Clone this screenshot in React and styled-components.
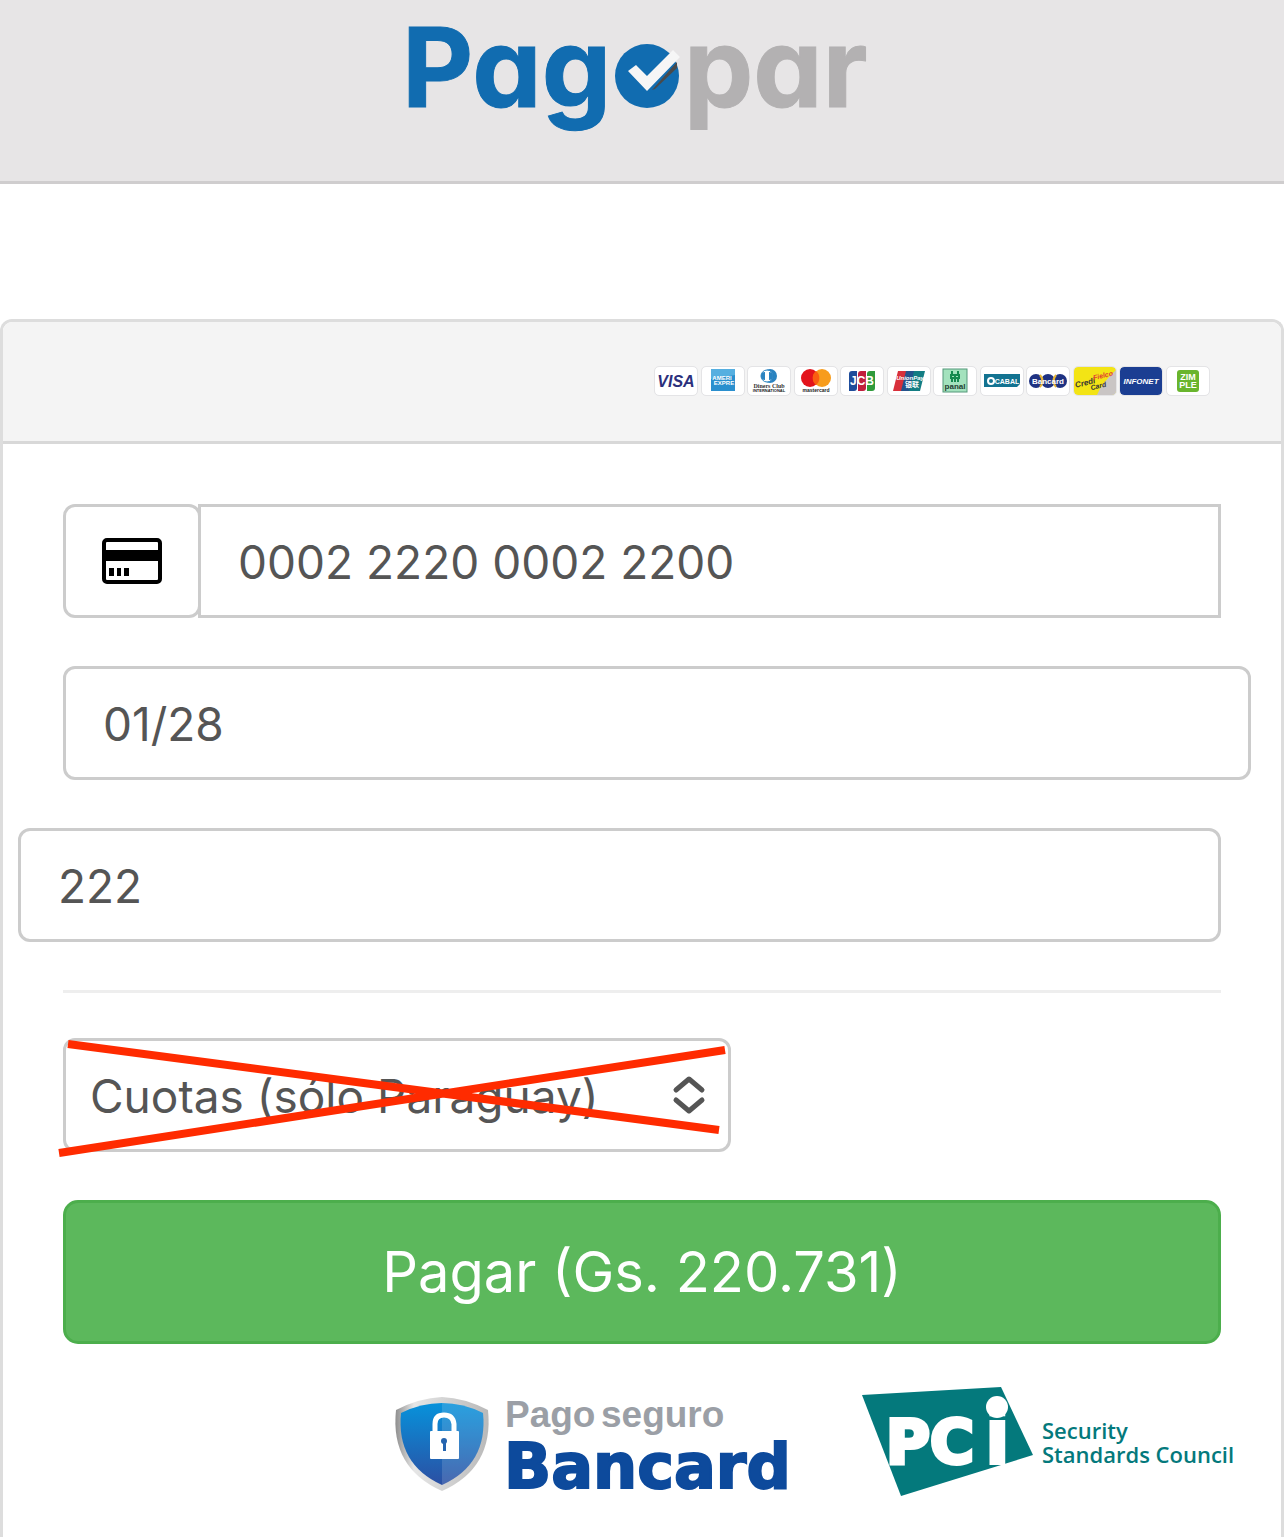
import React, { useState } from 'react';

// package
import styled, { createGlobalStyle } from 'styled-components';

// styles

const GlobalStyle = createGlobalStyle`
    * {
        box-sizing: border-box;
    }
    body {
        margin: 0;
        background-color: #fff;
        color: #555;
        font-family: Inter, "Liberation Sans", sans-serif;
    }
`;
const Page = styled.div`
    display: flex;
    flex-direction: column;
    min-height: 100vh;
`;
const Head = styled.header`
    display: flex;
    justify-content: center;
    margin-bottom: 135px;
    background-color: #e7e5e6;
    border-bottom: 3px solid #cfcdce;
`;
const Logo = styled.svg`
    display: block;
    width: 480px;
    max-width: 100%;
`;
const LogoWord = styled.text`
    fill: ${(props) => props.$color};
    stroke: ${(props) => props.$color};
    stroke-width: 1;
    font-family: Inter, sans-serif;
    font-size: 110px;
    font-weight: 700;
    font-feature-settings: "cv11";
`;
const Panel = styled.main`
    flex: 1;
    border: 3px solid #ddd;
    border-bottom: 0;
    border-radius: 12px 12px 0 0;
`;
const PanelHeading = styled.div`
    display: flex;
    justify-content: flex-end;
    padding: 45px 72px 46px;
    background-color: #f4f4f4;
    border-bottom: 3px solid #d8d8d8;
    border-radius: 9px 9px 0 0;
`;
const Brands = styled.div`
    display: flex;
    justify-content: space-between;
    width: 554px;
    max-width: 100%;
`;
const Brand = styled.svg`
    width: 42px;
    height: 28px;
    background-color: ${(props) => props.$color || '#fff'};
    border-radius: 4px;
    outline: 1px solid #e4e4e6;
`;
const CardText = styled.text`
    font-family: ${(props) => props.$font || '"Liberation Sans"'}, sans-serif;
    font-size: ${(props) => props.$size}px;
    font-style: ${(props) => props.$italic ? 'italic' : 'normal'};
    font-weight: 700;
    text-anchor: middle;
`;
const Form = styled.form`
    padding: 60px 60px 0;
`;
const Group = styled.div`
    display: flex;
    margin: 0 ${(props) => props.$right || 0} 48px ${(props) => props.$left || 0};
`;
const Addon = styled.label`
    display: flex;
    flex: none;
    align-items: center;
    justify-content: center;
    width: 138px;
    border: 3px solid #ccc;
    border-radius: 12px;
`;
const Input = styled.input`
    flex: 1;
    min-width: 0;
    height: 114px;
    padding: 2px 37px 0;
    background: transparent;
    border: 3px solid #ccc;
    border-radius: 12px;
    color: #555;
    font-family: inherit;
    font-size: 46px;
`;
const CardInput = styled(Input)`
    margin-left: -3px;
    border-radius: 0;
`;
const Divider = styled.hr`
    margin: 0 0 45px;
    border: 0;
    border-top: 3px solid #eee;
`;
const SelectBox = styled.div`
    position: relative;
    max-width: 668px;
    margin-bottom: 48px;
`;
const Select = styled.select`
    display: block;
    width: 100%;
    height: 114px;
    padding: 2px 24px 0;
    appearance: none;
    background-color: #fff;
    border: 3px solid #ccc;
    border-radius: 12px;
    color: #555;
    font-family: inherit;
    font-size: 46px;
`;
const Arrows = styled.svg`
    position: absolute;
    top: 37px;
    right: 24px;
    width: 36px;
    height: 40px;
    pointer-events: none;
    fill: none;
    stroke: #555;
    stroke-width: 5;
    stroke-linecap: round;
    stroke-linejoin: round;
`;
const Cross = styled.svg`
    position: absolute;
    top: 0;
    left: 0;
    width: 100%;
    height: 100%;
    overflow: visible;
    pointer-events: none;
    fill: none;
    stroke: #ff2b00;
    stroke-width: 8;
`;
const PayButton = styled.button`
    display: block;
    width: 100%;
    height: 144px;
    background-color: #5cb85c;
    border: 3px solid #4cae4c;
    border-radius: 15px;
    color: #fff;
    font-family: inherit;
    font-size: 56px;
    cursor: pointer;
`;
const Seals = styled.div`
    display: flex;
    justify-content: flex-end;
    gap: 20px;
    padding: 26px 21px 0 0;
`;
const Seal = styled.svg`
    display: block;
    min-width: 0;
`;
const SealSmall = styled.text`
    fill: #9b9fa6;
    font-family: "Liberation Sans", sans-serif;
    font-size: 37px;
    font-weight: 700;
`;
const SealBrand = styled.text`
    fill: #0d4a9c;
    stroke: #0d4a9c;
    stroke-width: 2;
    font-family: "DejaVu Sans", sans-serif;
    font-size: 62px;
    font-weight: 700;
`;
const PciText = styled.text`
    fill: #fff;
    stroke: #fff;
    stroke-width: ${(props) => props.$stroke};
    font-family: "DejaVu Sans", sans-serif;
    font-size: ${(props) => props.$size}px;
    font-weight: 700;
`;
const PciCaption = styled.text`
    fill: #04797c;
    font-family: "Open Sans", sans-serif;
    font-size: 22px;
    font-weight: 600;
`;

// components

function PagoparLogo() {
    return (
        <Logo viewBox="402 0 480 181" role="img" aria-label="Pagopar">
            <LogoWord x="402" y="107" $color="#116cb0">Pag</LogoWord>
            <circle cx="647" cy="76" r="32" fill="#116cb0" />
            <path d="M652 90 L677 62 L677 68 L655 89 Z" fill="#4a4a4a" />
            <path d="M628 71 L636 65 L647 76 L673 50 L680 57 L647 91 Z" fill="#f6f6f6" />
            <LogoWord x="684" y="107" $color="#b3b1b2">par</LogoWord>
        </Logo>
    )
}

function CreditCardIcon() {
    return (
        <svg width="60" height="46" viewBox="0 0 60 46" aria-hidden="true">
            <rect x="2" y="2" width="56" height="42" rx="3" fill="#fff" stroke="#000" strokeWidth="4" />
            <path d="M2 12h56v11H2z" />
            <path d="M7 30h5v8H7zM15 30h4v8h-4zM22 30h5v8h-5z" />
        </svg>
    )
}

const brands = [
    {
        name: 'Visa',
        art: <CardText x="21" y="20" $size={16} $italic fill="#2b2f7c">VISA</CardText>,
    },
    {
        name: 'American Express',
        art: (
            <>
                <rect x="9" y="2" width="24" height="22" fill="#2a8fce" />
                <path d="M9 2h24v6L9 12z" fill="#56afe0" />
                <CardText x="20" y="13" $size={6} fill="#fff">AMERI</CardText>
                <CardText x="22" y="18" $size={6} fill="#fff">EXPRE</CardText>
            </>
        ),
    },
    {
        name: 'Diners Club',
        art: (
            <>
                <circle cx="22" cy="9" r="7" fill="#2a83c0" />
                <circle cx="19" cy="9" r="6" fill="#fff" stroke="#2a83c0" />
                <path d="M17 5a4 4 0 0 0 0 8zM21 5a4 4 0 0 1 0 8z" fill="#2a83c0" />
                <CardText x="21" y="21" $size={6} $font='"Liberation Serif"' fill="#333">Diners Club</CardText>
                <CardText x="21" y="25" $size={4} fill="#222">INTERNATIONAL</CardText>
            </>
        ),
    },
    {
        name: 'Mastercard',
        art: (
            <>
                <circle cx="15" cy="11" r="9" fill="#e3131b" />
                <circle cx="27" cy="11" r="9" fill="#f79c1c" />
                <path d="M21 4a9 9 0 0 1 0 14a9 9 0 0 1 0-14z" fill="#fa5d10" />
                <CardText x="21" y="25" $size={5} fill="#222">mastercard</CardText>
            </>
        ),
    },
    {
        name: 'JCB',
        art: (
            <>
                <path d="M11 4h5v17q0 3-3 3H8V7q0-3 3-3z" fill="#1e4c9a" />
                <path d="M20 4h5v17q0 3-3 3h-5V7q0-3 3-3z" fill="#c11f3d" />
                <path d="M29 4h5v17q0 3-3 3h-5V7q0-3 3-3z" fill="#2f9a3c" />
                <CardText x="21" y="18" $size={12} fill="#fff">JCB</CardText>
            </>
        ),
    },
    {
        name: 'UnionPay',
        art: (
            <>
                <path d="M10 4h9l-5 20H5z" fill="#d8303b" />
                <path d="M18 4h9l-5 20h-9z" fill="#25538c" />
                <path d="M26 4h11l-5 20H21z" fill="#137d83" />
                <CardText x="22" y="13" $size={6} $italic fill="#fff">UnionPay</CardText>
                <CardText x="24" y="20" $size={7} $font='"Noto Sans CJK SC"' fill="#fff">银联</CardText>
            </>
        ),
    },
    {
        name: 'Panal',
        art: (
            <>
                <rect x="9" y="2" width="24" height="23" fill="#a3e2bd" stroke="#54987a" />
                <path d="M18 4v4M24 4v4M17 8h8v3h-8zM18 12v3M24 12v3M21 9v6" stroke="#16894f" strokeWidth="2" fill="none" />
                <CardText x="21" y="22" $size={8} fill="#223c31">panal</CardText>
            </>
        ),
    },
    {
        name: 'Cabal',
        art: (
            <>
                <path d="M3 7h36v10l-3 3H3z" fill="#137391" />
                <circle cx="10" cy="14" r="3" fill="none" stroke="#fff" strokeWidth="2" />
                <CardText x="26" y="17" $size={7} fill="#fff">CABAL</CardText>
            </>
        ),
    },
    {
        name: 'Bancard',
        art: (
            <>
                <circle cx="9" cy="14" r="7" fill="#1f3282" />
                <circle cx="21" cy="14" r="7" fill="#1f3282" />
                <circle cx="33" cy="14" r="7" fill="#1f3282" />
                <path d="M13 8q5 6 0 12M29 8q-5 6 0 12" stroke="#e9b735" strokeWidth="2" fill="none" />
                <CardText x="21" y="17" $size={8} fill="#fff">Bancard</CardText>
            </>
        ),
    },
    {
        name: 'Credifielco',
        color: '#f3e415',
        art: (
            <>
                <path d="M42 3v25H23q4-11 19-25z" fill="#c9c5c4" />
                <g transform="rotate(-14 21 14)">
                    <CardText x="11" y="16" $size={8} $italic fill="#333">Credi</CardText>
                    <CardText x="30" y="13" $size={7} $italic fill="#e23a34">Fielco</CardText>
                    <CardText x="23" y="22" $size={7} $italic fill="#333">Card</CardText>
                </g>
            </>
        ),
    },
    {
        name: 'Infonet',
        color: '#1b3e92',
        art: (
            <CardText x="21" y="17" $size={8} $italic fill="#fff">INFONET</CardText>
        ),
    },
    {
        name: 'Zimple',
        art: (
            <>
                <rect x="10" y="3" width="22" height="22" rx="3" fill="#69b52d" />
                <CardText x="21" y="13" $size={9} fill="#fff">ZIM</CardText>
                <CardText x="21" y="21" $size={9} fill="#fff">PLE</CardText>
            </>
        ),
    },
];

function BancardSeal() {
    return (
        <Seal width="450" height="150" viewBox="370 1370 450 150" role="img" aria-label="Pago seguro Bancard">
            <defs>
                <linearGradient id="shield" x1="0" y1="0" x2="0" y2="1">
                    <stop offset="0" stopColor="#0792db" />
                    <stop offset="1" stopColor="#2b4fa3" />
                </linearGradient>
                <linearGradient id="rim" x1="0" y1="0" x2="1" y2="0">
                    <stop offset="0" stopColor="#8f8f8f" />
                    <stop offset="0.2" stopColor="#e6e6e6" />
                    <stop offset="1" stopColor="#b9b9b9" />
                </linearGradient>
            </defs>
            <path d="M442 1397Q465 1398 488 1410Q494 1468 442 1491Q390 1468 396 1410Q419 1398 442 1397Z" fill="url(#rim)" />
            <path d="M442 1403Q463 1403 483 1413Q488 1464 442 1485Q396 1464 401 1413Q421 1403 442 1403Z" fill="url(#shield)" />
            <path d="M442 1403Q463 1403 483 1413Q488 1464 442 1485Z" fill="#fff" opacity="0.14" />
            <path d="M435 1433v-9q0-9 9-9t10 9v9" fill="none" stroke="#fff" strokeWidth="5" />
            <rect x="430" y="1431" width="29" height="28" rx="1" fill="#fff" />
            <circle cx="444" cy="1441" r="3" fill="#2564af" />
            <path d="M443 1442h3v9h-3z" fill="#2564af" />
            <SealSmall x="505" y="1427">Pago</SealSmall>
            <SealSmall x="601" y="1427">seguro</SealSmall>
            <SealBrand x="504" y="1488">Bancard</SealBrand>
        </Seal>
    )
}

function PciSeal() {
    return (
        <Seal width="420" height="150" viewBox="840 1370 420 150" role="img" aria-label="PCI Security Standards Council">
            <path d="M862 1395L1001 1387L1033 1455L901 1496Z" fill="#04797c" />
            <PciText x="886" y="1463" $size={60} $stroke={4}>PC</PciText>
            <PciText x="984" y="1464" $size={78} $stroke={2}>i</PciText>
            <circle cx="997" cy="1407" r="11" fill="#fff" />
            <PciCaption x="1042" y="1439">Security</PciCaption>
            <PciCaption x="1042" y="1463">Standards Council</PciCaption>
        </Seal>
    )
}

function App() {
    const [card, setCard] = useState('0002 2220 0002 2200');
    const [expiry, setExpiry] = useState('01/28');
    const [cvv, setCvv] = useState('222');

    return (
        <>
            <GlobalStyle />
            <Page>
                <Head>
                    <PagoparLogo />
                </Head>
                <Panel>
                    <PanelHeading>
                        <Brands>
                            {brands.map((brand) => (
                                <Brand key={brand.name} viewBox="0 0 42 28" role="img" aria-label={brand.name} $color={brand.color}>
                                    {brand.art}
                                </Brand>
                            ))}
                        </Brands>
                    </PanelHeading>
                    <Form onSubmit={(e) => e.preventDefault()}>
                        <Group>
                            <Addon htmlFor="card"><CreditCardIcon /></Addon>
                            <CardInput id="card" aria-label="Número de tarjeta" value={card} onChange={(e) => setCard(e.target.value)} />
                        </Group>
                        <Group $right="-30px">
                            <Input aria-label="Vencimiento" value={expiry} onChange={(e) => setExpiry(e.target.value)} />
                        </Group>
                        <Group $left="-45px">
                            <Input aria-label="Código de seguridad" value={cvv} onChange={(e) => setCvv(e.target.value)} />
                        </Group>
                        <Divider />
                        <SelectBox>
                            <Select aria-label="Cuotas" defaultValue="">
                                <option value="">Cuotas (sólo Paraguay)</option>
                            </Select>
                            <Arrows viewBox="0 0 36 40" aria-hidden="true">
                                <path d="M5 15L18 4L31 15M5 25L18 36L31 25" />
                            </Arrows>
                            <Cross viewBox="0 0 668 114" aria-hidden="true">
                                <path d="M5 6L656 92M-4 115L662 12" />
                            </Cross>
                        </SelectBox>
                        <PayButton type="submit">Pagar (Gs. 220.731)</PayButton>
                    </Form>
                    <Seals>
                        <BancardSeal />
                        <PciSeal />
                    </Seals>
                </Panel>
            </Page>
        </>
    )
}

export default App
